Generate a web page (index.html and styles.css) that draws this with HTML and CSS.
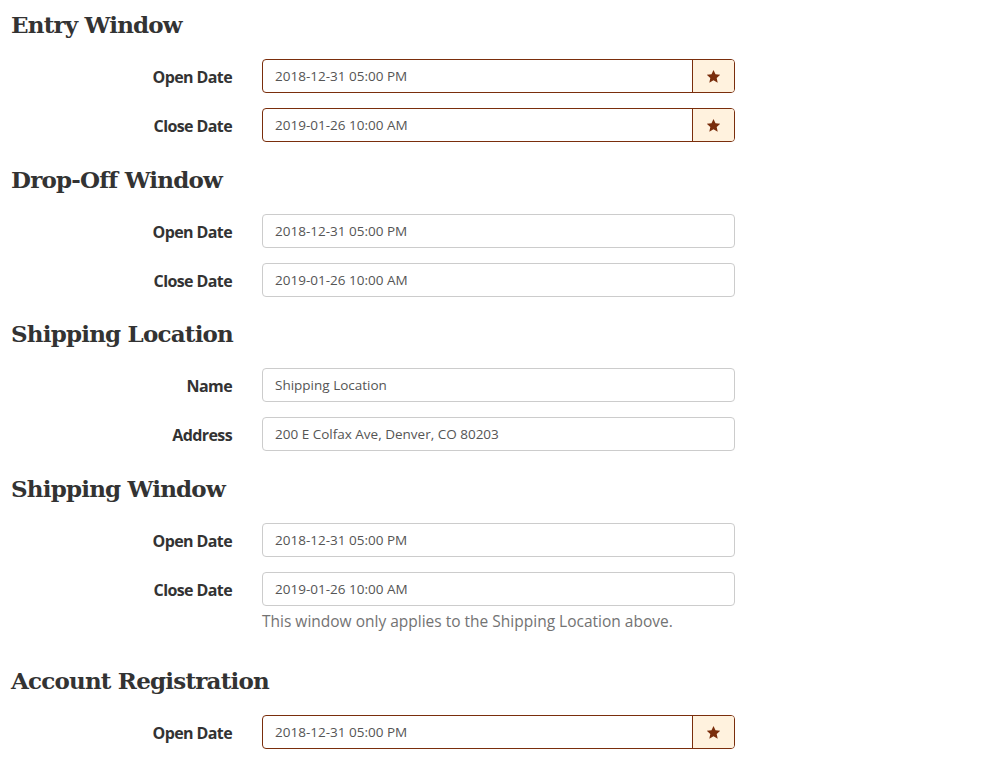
FILE: index.html
```html
<!DOCTYPE html>
<html>
<head>
<meta charset="utf-8">
<link rel="stylesheet" href="styles.css">
</head>
<body>
<div class="page">
  <h3 class="title first">Entry Window</h3>
  <div class="row"><label class="lbl">Open Date</label>
    <div class="group accent"><div class="field">2018-12-31 05:00 PM</div><span class="addon"><svg viewBox="0 0 24 24" width="15" height="15"><path d="M12 1.5l3.2 7 7.6.8-5.7 5.1 1.6 7.5L12 18l-6.7 3.9 1.6-7.5L1.2 9.3l7.6-.8z" fill="#7a2e0c"/></svg></span></div></div>
  <div class="row"><label class="lbl">Close Date</label>
    <div class="group accent"><div class="field">2019-01-26 10:00 AM</div><span class="addon"><svg viewBox="0 0 24 24" width="15" height="15"><path d="M12 1.5l3.2 7 7.6.8-5.7 5.1 1.6 7.5L12 18l-6.7 3.9 1.6-7.5L1.2 9.3l7.6-.8z" fill="#7a2e0c"/></svg></span></div></div>

  <h3 class="title">Drop-Off Window</h3>
  <div class="row"><label class="lbl">Open Date</label><div class="group"><div class="field">2018-12-31 05:00 PM</div></div></div>
  <div class="row"><label class="lbl">Close Date</label><div class="group"><div class="field">2019-01-26 10:00 AM</div></div></div>

  <h3 class="title">Shipping Location</h3>
  <div class="row"><label class="lbl">Name</label><div class="group"><div class="field">Shipping Location</div></div></div>
  <div class="row"><label class="lbl">Address</label><div class="group"><div class="field">200 E Colfax Ave, Denver, CO 80203</div></div></div>

  <h3 class="title">Shipping Window</h3>
  <div class="row"><label class="lbl">Open Date</label><div class="group"><div class="field">2018-12-31 05:00 PM</div></div></div>
  <div class="row"><label class="lbl">Close Date</label>
    <div class="col"><div class="group"><div class="field">2019-01-26 10:00 AM</div></div>
    <p class="help">This window only applies to the Shipping Location above.</p></div></div>

  <h3 class="title">Account Registration</h3>
  <div class="row"><label class="lbl">Open Date</label>
    <div class="group accent"><div class="field">2018-12-31 05:00 PM</div><span class="addon"><svg viewBox="0 0 24 24" width="15" height="15"><path d="M12 1.5l3.2 7 7.6.8-5.7 5.1 1.6 7.5L12 18l-6.7 3.9 1.6-7.5L1.2 9.3l7.6-.8z" fill="#7a2e0c"/></svg></span></div></div>
</div>
</body>
</html>
```
FILE: styles.css
```css
html, body { margin: 0; padding: 0; background: #fff; }
body { font-family: "Open Sans", "Noto Sans", sans-serif; color: #333; }
.page { padding: 2px 0 0 11px; width: 724px; }
.title {
  font-family: "DejaVu Serif", "Liberation Serif", serif;
  font-weight: bold;
  font-size: 23px;
  line-height: 26px;
  margin: 24.5px 0 21px;
  color: #333;
  letter-spacing: -0.8px;
}
.title.first { margin-top: 10px; }
.row { display: flex; align-items: flex-start; margin-bottom: 15px; }
.lbl {
  width: 221px;
  height: 34px;
  text-align: right;
  font-weight: 700;
  font-size: 16px;
  line-height: 36px;
  padding-right: 30px;
  letter-spacing: -0.6px;
  flex: none;
}
.col { display: flex; flex-direction: column; width: 473px; }
.group {
  display: flex;
  width: 473px;
  height: 34px;
  box-sizing: border-box;
  border: 1px solid #ccc;
  border-radius: 4px;
  overflow: hidden;
}
.group.accent { border-color: #7a2e0c; }
.field {
  flex: 1;
  padding: 0 12px;
  font-size: 13.5px;
  line-height: 32px;
  color: #555;
}
.addon {
  width: 41px;
  flex: none;
  background: #fff2de;
  border-left: 1px solid #7a2e0c;
  display: flex;
  align-items: center;
  justify-content: center;
}
.help {
  margin: 5px 0 13px;
  font-size: 15.5px;
  line-height: 20px;
  color: #737373;
}
```
